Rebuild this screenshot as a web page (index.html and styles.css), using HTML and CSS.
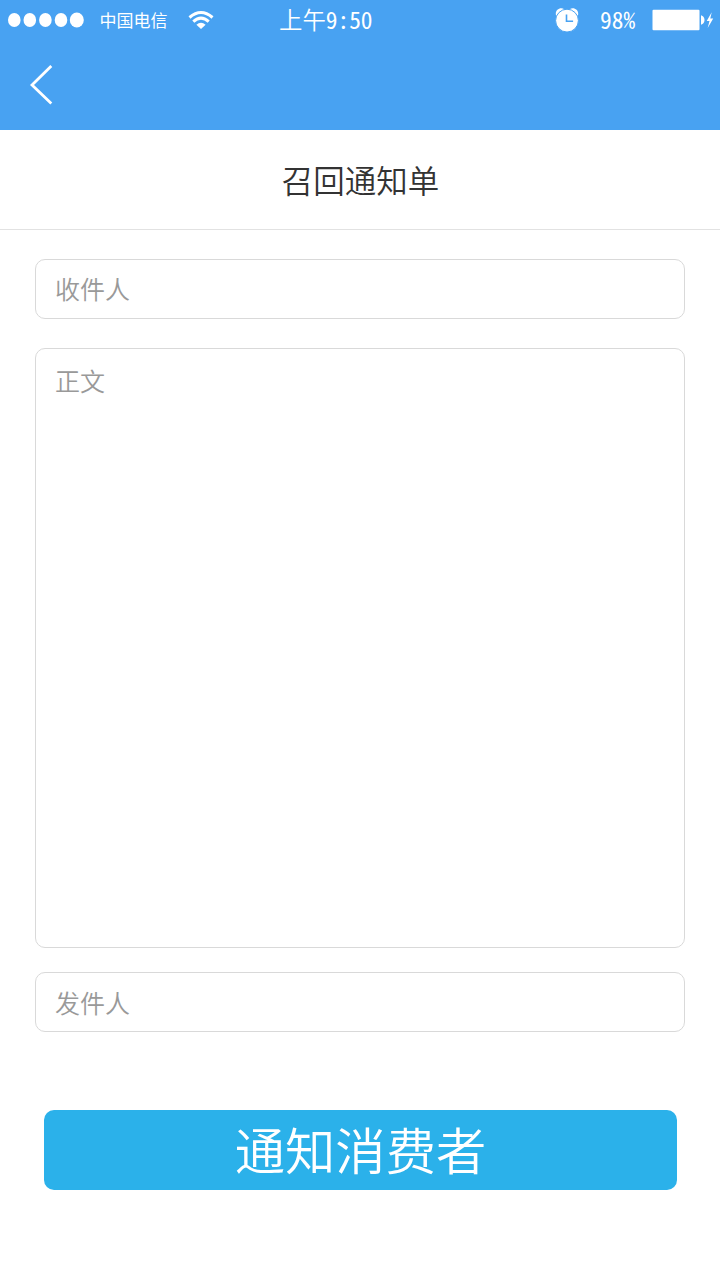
FILE: index.html
```html
<!DOCTYPE html>
<html lang="zh-CN">
<head>
<meta charset="utf-8">
<title>召回通知单</title>
<link rel="stylesheet" href="styles.css">
</head>
<body>
<header class="header">
  <div class="status">
    <div class="status-left">
      <svg class="signal" width="77" height="16" viewBox="0 0 77 16" fill="#fff">
        <ellipse cx="6.3" cy="8" rx="6.3" ry="7"/>
        <ellipse cx="21.8" cy="8" rx="6.3" ry="7"/>
        <ellipse cx="37.4" cy="8" rx="6.3" ry="7"/>
        <ellipse cx="53" cy="8" rx="6.3" ry="7"/>
        <ellipse cx="68.8" cy="8" rx="7" ry="7.4"/>
      </svg>
      <span class="carrier">中国电信</span>
      <svg class="wifi" width="26" height="20" viewBox="0 0 26 20" fill="none" stroke="#fff" stroke-width="3">
        <path d="M1.5 7.5Q13-2.6 24.5 7.5"/>
        <path d="M5.3 11.6Q13 4.6 20.7 11.6"/>
        <path d="M8.4 14.8Q13 10.8 17.6 14.8L13 19Z" fill="#fff" stroke="none"/>
      </svg>
    </div>
    <span class="time">上午<span class="digits">9:50</span></span>
    <div class="status-right">
      <svg class="alarm" width="24" height="26" viewBox="0 0 24 26">
        <path d="M1.3 9C-.9 4 4.5-.6 9.3 2.2ZM22.7 9C24.9 4 19.5-.6 14.7 2.2Z" fill="#fff"/>
        <circle cx="12" cy="13.6" r="11.4" fill="#fff" stroke="#48a2f2" stroke-width="1"/>
        <path d="M11.5 7.5v6.8h6.6" fill="none" stroke="#48a2f2" stroke-width="1.6"/>
      </svg>
      <span class="percent digits">98%</span>
      <svg class="battery" width="62" height="22" viewBox="0 0 62 22" fill="#fff">
        <rect x="0.5" y="0.7" width="47" height="20.6" rx="1"/>
        <path d="M49 6.2Q52.5 7.5 52.5 11T49 15.8Z"/>
        <path d="M59.7 3.2L54.7 12H57.5L55.7 19L61.2 9.6H58.3Z"/>
      </svg>
    </div>
  </div>
  <nav class="nav">
    <svg class="back" width="24" height="42" viewBox="0 0 24 42" fill="none" stroke="#fff" stroke-width="2.8">
      <path d="M21.3 2L2 21L21.3 39.5"/>
    </svg>
  </nav>
</header>
<h1 class="title">召回通知单</h1>
<main class="form">
  <div class="field recipient">收件人</div>
  <div class="field message">正文</div>
  <div class="field sender">发件人</div>
  <button class="submit" type="button">通知消费者</button>
</main>
</body>
</html>
```
FILE: styles.css
```css
* { box-sizing: border-box; }

body {
  margin: 0;
  min-height: 1280px;
  background: #fff;
  font-family: "Noto Sans CJK SC", sans-serif;
  font-weight: 350;
}

svg { display: block; flex: none; }

.header {
  height: 130px;
  background: #48a2f2;
  color: #fff;
}

.status {
  display: grid;
  grid-template-columns: 279px auto 165px;
  justify-content: space-between;
  align-items: center;
  height: 40px;
}

.status-left,
.status-right {
  display: flex;
  align-items: center;
}

.status-left { padding-left: 8px; }

.carrier {
  margin-left: 14.5px;
  width: 68.5px;
  font-size: 17px;
  line-height: 40px;
  font-weight: 400;
  white-space: nowrap;
}

.wifi { margin-left: 20px; }

.time,
.percent {
  height: 40px;
  font-size: 23.4px;
  line-height: 38px;
  white-space: nowrap;
}

.digits {
  font-weight: 400;
  font-feature-settings: "hwid";
}

.time { justify-self: start; width: 276px; }

.percent { margin-left: 21px; width: 36px; }

.battery { margin-left: 16px; }

.nav {
  display: flex;
  align-items: center;
  height: 90px;
  padding-left: 30px;
}

.title {
  margin: 0;
  height: 100px;
  padding-left: 1px;
  border-bottom: 1px solid #e2e2e2;
  color: #333;
  font-size: 31.5px;
  font-weight: 350;
  line-height: 99px;
  text-align: center;
}

.form {
  display: flex;
  flex-direction: column;
  padding: 29px 35px 0;
}

.field {
  height: 60px;
  padding: 0 19px;
  border: 1px solid #d9d9d9;
  border-radius: 10px;
  color: #999;
  font-size: 25px;
  line-height: 57px;
}

.message {
  height: 600px;
  margin: 29px 0 24px;
  padding-top: 3px;
}

.sender { line-height: 59px; }

.submit {
  width: 633px;
  height: 80px;
  margin: 78px 0 0 9px;
  padding: 0 0 3px;
  border: 0;
  border-radius: 10px;
  background: #2bb1ea;
  color: #fff;
  font-family: inherit;
  font-size: 50.3px;
  font-weight: 350;
  line-height: 77px;
}
```
